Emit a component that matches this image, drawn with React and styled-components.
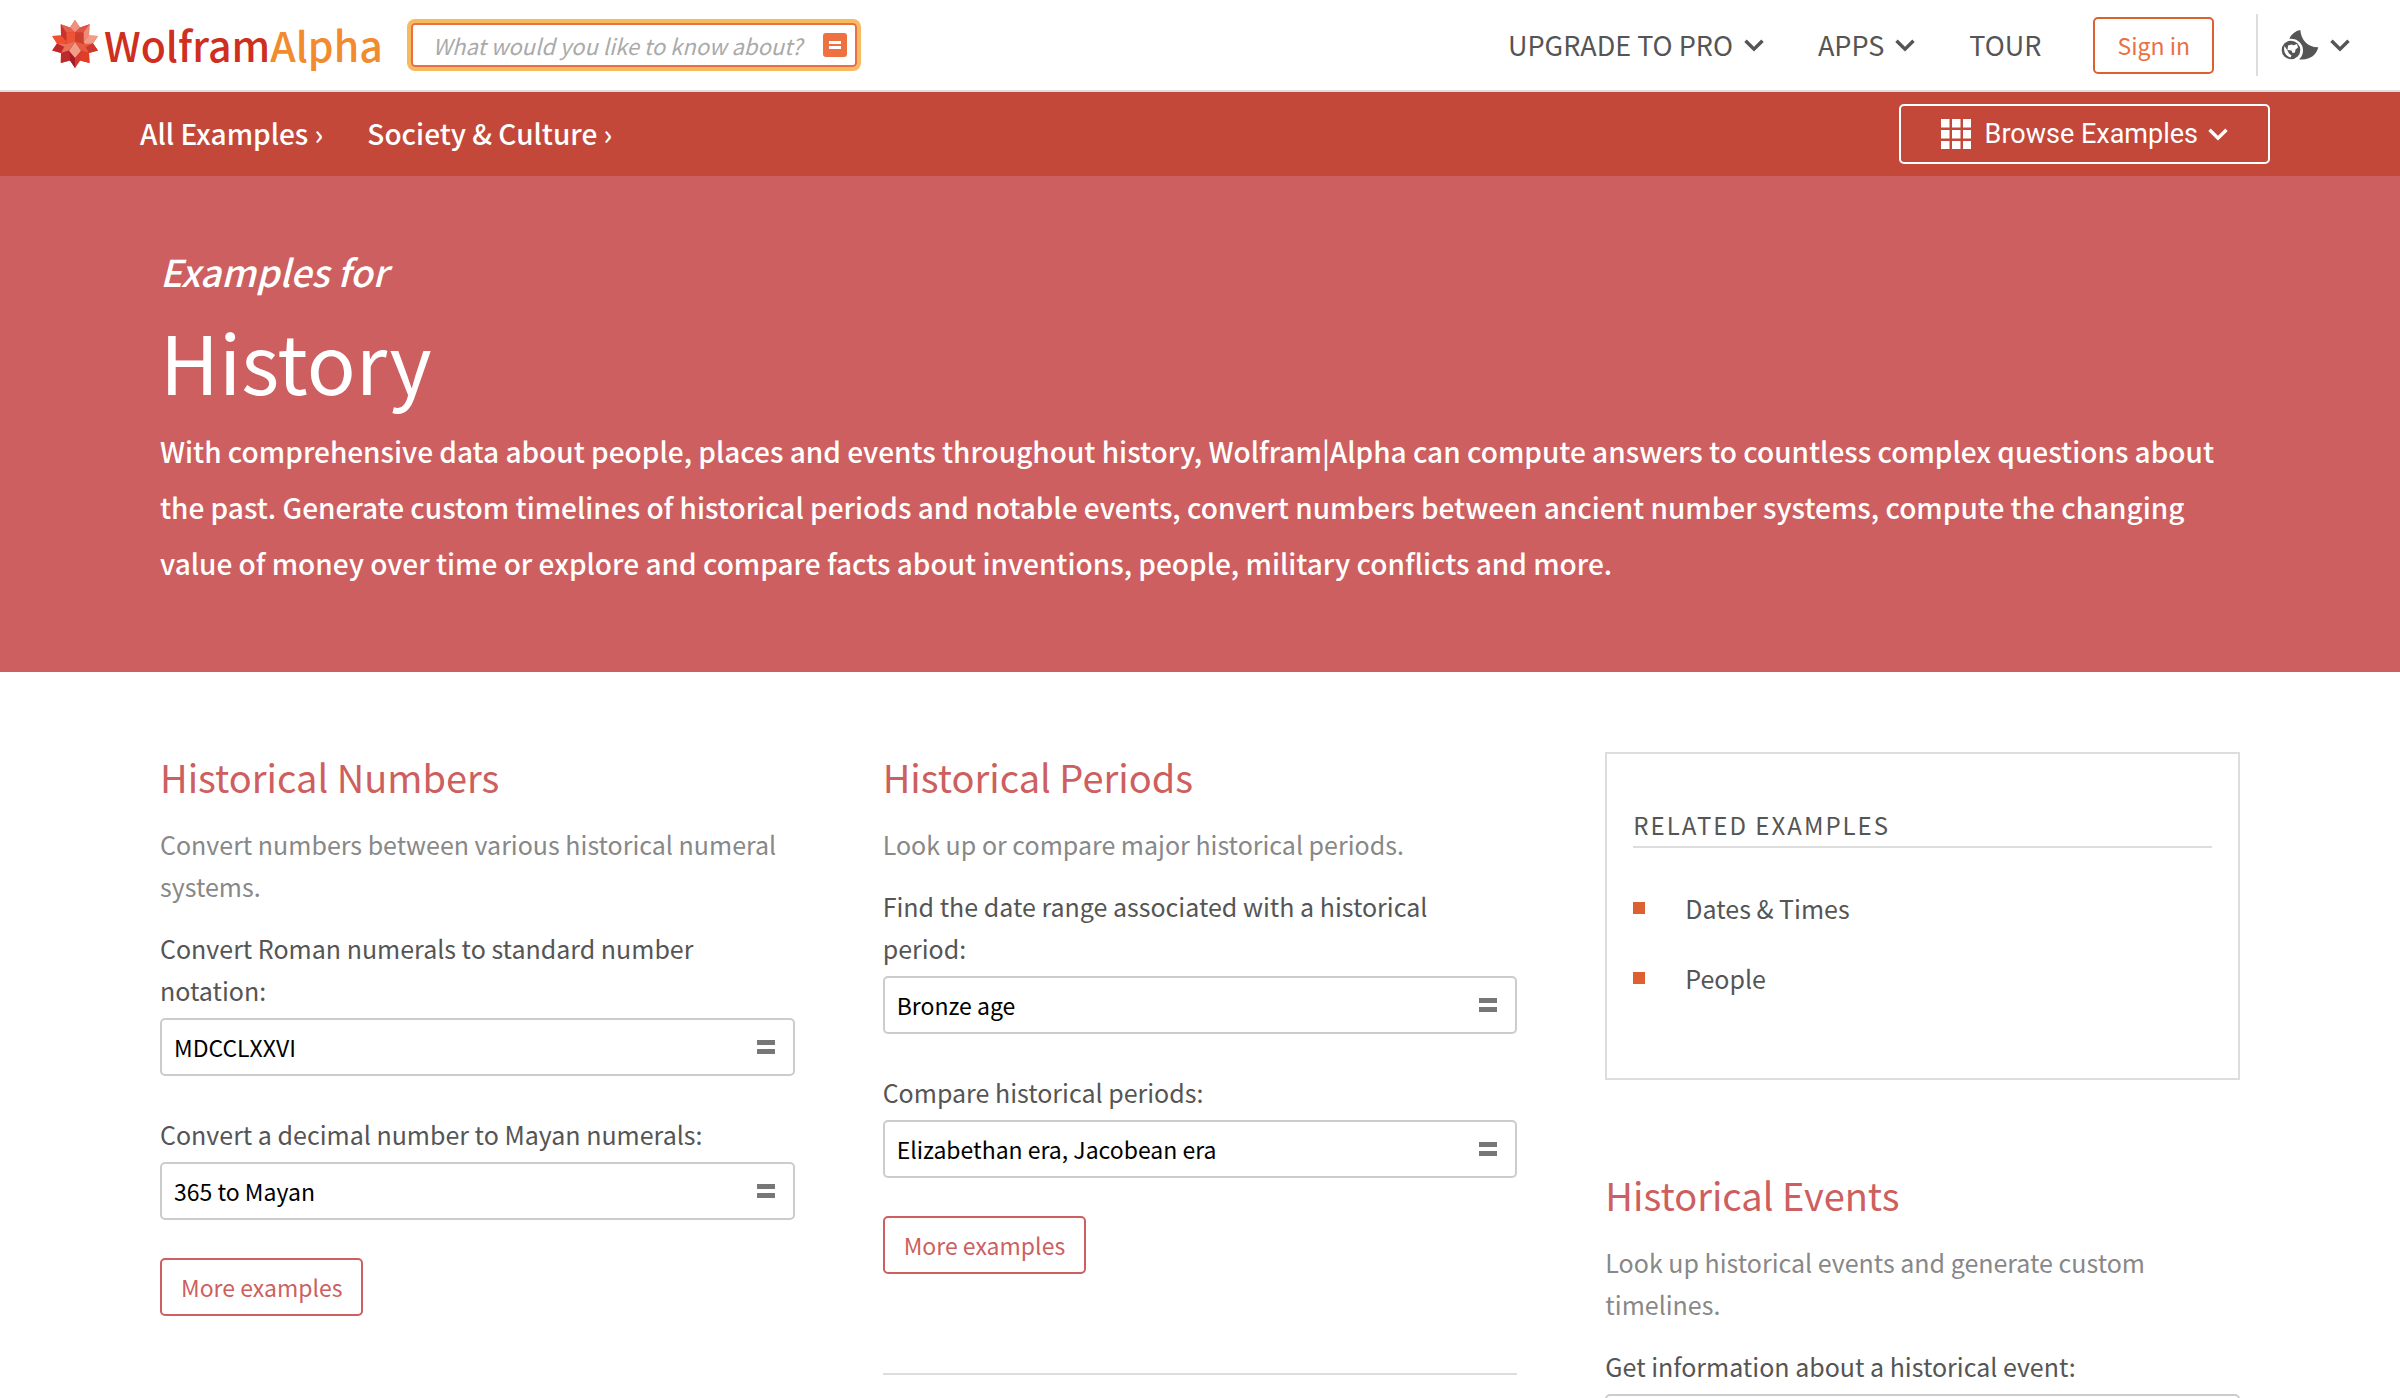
import React, { useId } from "react";
import styled, { createGlobalStyle, css } from "styled-components";

const sans = `"Noto Sans CJK SC", "Noto Sans", sans-serif`;

const GlobalStyle = createGlobalStyle`
  *, *::before, *::after { box-sizing: border-box; }
  html, body { margin: 0; background: #fff; }
  body { font-family: ${sans}; color: #555; overflow-x: hidden; }
  h1, h2, p, ul { margin: 0; padding: 0; font-weight: 400; }
  button, input { font-family: inherit; font-weight: 400; }
`;

const Header = styled.header`
  display: flex;
  align-items: center;
  height: 92px;
  padding: 0 50px 0 51px;
  border-bottom: 2px solid #ddd;
  background: #fff;
`;

const Logo = styled.a`
  display: flex;
  align-items: center;
  gap: 5px;
  margin-right: 28px;
  padding-bottom: 2px;
  font-size: 41px;
  font-weight: 500;
  line-height: 54px;
  color: #ce2f1e;
  text-decoration: none;
`;

const LogoAccent = styled.span`
  color: #f28a2e;
`;

const SearchForm = styled.form`
  display: flex;
  align-items: center;
  width: 446px;
  height: 44px;
  padding: 0 8px 0 20px;
  border: 2px solid #eb6f43;
  border-radius: 4px;
  box-shadow: 0 0 0 4px #f6bb60;
`;

const SearchInput = styled.input`
  flex: 1;
  min-width: 0;
  padding: 0;
  border: 0;
  outline: 0;
  background: transparent;
  font-size: 22px;
  line-height: 32px;
  color: #333;
  &::placeholder { color: #aaa; font-style: italic; opacity: 1; }
`;

const SearchButton = styled.button`
  display: flex;
  align-items: center;
  justify-content: center;
  width: 24px;
  height: 24px;
  padding: 0;
  border: 0;
  border-radius: 3px;
  background: #ee7142;
  color: #fff;
`;

const MainNav = styled.nav`
  display: flex;
  align-items: center;
  margin-left: auto;
`;

const NavItem = styled.button`
  display: flex;
  align-items: center;
  gap: 11px;
  margin-right: 54px;
  padding: 0;
  border: 0;
  background: none;
  font-size: 27px;
  line-height: 36px;
  color: #555;
`;

const NavLink = styled.a`
  margin-right: 52px;
  font-size: 27px;
  line-height: 36px;
  color: #555;
  text-decoration: none;
`;

const outlined = css`
  border: 2px solid;
  border-radius: 5px;
  background: none;
`;

const SignIn = styled.button`
  ${outlined}
  height: 57px;
  padding: 0 22px;
  font-size: 23px;
  color: #eb6f43;
  border-color: #dd6031;
`;

const ThemeToggle = styled.button`
  display: flex;
  align-items: center;
  gap: 11px;
  height: 62px;
  margin-left: 42px;
  padding: 0 0 0 23px;
  border: 0;
  border-left: 2px solid #ddd;
  background: none;
  color: #555;
`;

const SubBar = styled.nav`
  display: flex;
  align-items: center;
  height: 84px;
  padding: 0 130px 0 140px;
  background: #c3483a;
`;

const Crumb = styled.a`
  margin-right: 44px;
  padding-bottom: 2px;
  font-size: 28px;
  font-weight: 500;
  line-height: 42px;
  color: #fff;
  text-decoration: none;
`;

const BrowseButton = styled.button`
  ${outlined}
  display: flex;
  align-items: center;
  height: 60px;
  margin-left: auto;
  padding: 0 40px;
  border-color: #fff;
  color: #fff;
`;

const BrowseLabel = styled.span`
  margin: 0 10px 0 14px;
  font: 400 27px/36px Roboto, sans-serif;
`;

const Hero = styled.section`
  padding: 68px 160px 81px;
  background: #cd5f60;
  color: #fff;
`;

const Kicker = styled.p`
  font-size: 37px;
  font-weight: 500;
  line-height: 54px;
  font-style: italic;
`;

const Title = styled.h1`
  margin-bottom: 1px;
  font-size: 81px;
  line-height: 124px;
`;

const Intro = styled.p`
  font-size: 28px;
  font-weight: 500;
  line-height: 56px;
`;

const Columns = styled.main`
  display: grid;
  grid-template-columns: repeat(3, minmax(0, 1fr));
  column-gap: 88px;
  align-items: start;
  padding: 80px 160px;
`;

const Topic = styled.section`
  display: flex;
  flex-direction: column;
  align-items: flex-start;
`;

const TopicTitle = styled.h2`
  font-size: 38px;
  line-height: 50px;
  color: #cd5f60;
`;

const Summary = styled.p`
  margin-top: 21px;
  font-size: 25px;
  line-height: 42px;
  color: #888;
`;

const Example = styled.div`
  width: 100%;
  margin-top: ${(p) => (p.$first ? "20px" : "37px")};
`;

const ExampleLabel = styled.label`
  display: block;
  padding-right: 12px;
  font-size: 25px;
  line-height: 42px;
`;

const ExampleField = styled.div`
  display: flex;
  align-items: center;
  height: 58px;
  margin-top: 7px;
  padding: 0 18px 0 12px;
  border: 2px solid #ccc;
  border-radius: 5px;
`;

const ExampleInput = styled.input`
  flex: 1;
  min-width: 0;
  padding: 0;
  border: 0;
  outline: 0;
  background: none;
  font-size: 23px;
  line-height: 36px;
  color: #000;
`;

const Compute = styled.button`
  display: flex;
  padding: 0;
  border: 0;
  background: none;
  color: #777;
`;

const MoreButton = styled.button`
  ${outlined}
  height: 58px;
  margin-top: 38px;
  padding: 0 19px;
  border-color: #cd5f60;
  font-size: 23px;
  color: #cd5f60;
`;

const Divider = styled.hr`
  width: 100%;
  height: 2px;
  margin: 99px 0 0;
  border: 0;
  background: #ddd;
`;

const Related = styled.aside`
  height: 328px;
  margin-bottom: 90px;
  padding: 53px 26px;
  border: 2px solid #ddd;
`;

const RelatedTitle = styled.h2`
  padding-bottom: 3px;
  border-bottom: 2px solid #ddd;
  font-size: 24px;
  line-height: 36px;
  letter-spacing: 2px;
`;

const RelatedList = styled.ul`
  display: flex;
  flex-direction: column;
  gap: 28px;
  margin-top: 39px;
  list-style: none;
`;

const RelatedItem = styled.li`
  display: flex;
  align-items: center;
  gap: 40px;
  font-size: 25px;
  line-height: 42px;
  &::before { content: ""; width: 12px; height: 12px; background: #dd6031; }
`;

const RelatedLink = styled.a`
  color: #555;
  text-decoration: none;
`;

function Spikey() {
  return (
    <svg width="48" height="48" viewBox="0 0 47 48" aria-hidden="true">
      <path fill="#d5402e" d="M23.500 0l5 7.500L38 4.300l-.5 11.200 9 .5-5 7.500 5 7-9 2.500.5 10-9.500-2.500-5 7.500-5-7.500-9.200 2.500.2-10-8.800-2.500 4.800-7L.7 16l8.800-.5-.2-11.200 9.200 3.200z" />
      <path fill="#f0907e" d="M23.500 0l5 7.500-5 5-5-5z" />
      <path fill="#c8322b" d="M9.300 4.300l5.700 8.200v9L9.500 15.500z" />
      <path fill="#e2604e" d="M9.300 4.300l9.200 3.200 5 5H15z" />
      <path fill="#dd5546" d="M38 4.300l-9.500 3.200-5 5H32z" />
      <path fill="#ef8a78" d="M38 4.300l-6 8.200v9l5.500-6z" />
      <path fill="#f04f30" d="M.7 16l8.800-.5 5.500 6-2 3.500-7.500-1.500z" />
      <path fill="#f29b87" d="M46.500 16l-9-.5-5.500 6 2 3.500 7.500-1.500z" />
      <path fill="#ee5336" d="M15 12.500h8.500v9L15 24z" />
      <path fill="#cf3f30" d="M23.500 12.500H32V24l-8.500-2.500z" />
      <path fill="#c0272b" d="M.7 30.500l4.800-7L13 25l-3.500 8z" />
      <path fill="#cc3830" d="M46.500 30.500l-5-7L34 25l3.500 8z" />
      <path fill="#e9705a" d="M5.500 23.500L15 24l8.500-2.500-6 9-8 2.500L13 27z" />
      <path fill="#e65a40" d="M41.500 23.500L32 24l-8.500-2.500 6 9 8 2.500L34 27z" />
      <path fill="#f39c88" d="M23.500 22l6 9-6 7-6-7z" />
      <path fill="#bd2a2c" d="M9.500 33l8-2.500 1 10L9.300 43z" />
      <path fill="#e03c26" d="M37.500 33l-8-2.500-1 10L38 43z" />
      <path fill="#a51c26" d="M17.500 31l6 7v10l-5-7.500z" />
      <path fill="#d33a30" d="M29.500 31l-6 7v10l5-7.500z" />
    </svg>
  );
}

function Chevron() {
  return (
    <svg width="20" height="13" viewBox="0 0 20 13" fill="none" aria-hidden="true">
      <path d="M1.500 1.700l8.500 8.500 8.500-8.500" stroke="currentColor" strokeWidth="3.400" />
    </svg>
  );
}

function Equals({ width = 18, height = 14, bar = 5 }) {
  return (
    <svg width={width} height={height} viewBox={`0 0 ${width} ${height}`} fill="currentColor" aria-hidden="true">
      <rect width={width} height={bar} />
      <rect y={height - bar} width={width} height={bar} />
    </svg>
  );
}

function GlobeMoon() {
  return (
    <svg width="38" height="32" viewBox="0 0 38 32" aria-hidden="true">
      <path fill="#555" d="M19.300 1C20 10 26 18.500 37.300 18.300 35 27 28 31.500 18 30.200 22 27.500 23 21 21 16.500 19 12 14 9 8.300 9.800 10.500 5 14.500 2 19.300 1z" />
      <circle cx="10" cy="21" r="9.300" fill="#555" />
      <path fill="#fff" d="M7 16.500l3.500-1 2 .8 3.500-1.300 1 3.500-2.500 2-.5 3-2.500.5-1-2.500-4-.5z" />
      <path fill="#fff" d="M3.500 17c-1.500 5 1 10 6 11.500l1-2-2.500-2-1.500-3z" />
    </svg>
  );
}

function GridIcon() {
  return (
    <svg width="30" height="30" viewBox="0 0 30 30" fill="currentColor" aria-hidden="true">
      {[0, 11, 22].map((y) => [0, 11, 22].map((x) => <rect key={`${x}-${y}`} x={x} y={y} width="8.500" height="8.500" />))}
    </svg>
  );
}

function ExampleQuery({ label, query, first }) {
  const id = useId();
  return (
    <Example $first={first}>
      <ExampleLabel htmlFor={id}>{label}</ExampleLabel>
      <ExampleField>
        <ExampleInput id={id} defaultValue={query} />
        <Compute type="button" aria-label="Compute"><Equals /></Compute>
      </ExampleField>
    </Example>
  );
}

function TopicBlock({ title, summary, examples, more, divided }) {
  return (
    <Topic>
      <TopicTitle>{title}</TopicTitle>
      <Summary>{summary}</Summary>
      {examples.map(([label, query], i) => (
        <ExampleQuery key={label} label={label} query={query} first={i === 0} />
      ))}
      {more && <MoreButton type="button">More examples</MoreButton>}
      {divided && <Divider />}
    </Topic>
  );
}

export default function App() {
  return (
    <>
      <GlobalStyle />
      <Header>
        <Logo href="#home">
          <Spikey />
          <span>Wolfram<LogoAccent>Alpha</LogoAccent></span>
        </Logo>
        <SearchForm onSubmit={(e) => e.preventDefault()}>
          <SearchInput aria-label="Search" placeholder="What would you like to know about?" />
          <SearchButton aria-label="Compute"><Equals width={12} height={8} bar={3} /></SearchButton>
        </SearchForm>
        <MainNav>
          <NavItem type="button">UPGRADE TO PRO<Chevron /></NavItem>
          <NavItem type="button">APPS<Chevron /></NavItem>
          <NavLink href="#tour">TOUR</NavLink>
          <SignIn type="button">Sign in</SignIn>
          <ThemeToggle type="button" aria-label="Theme and language"><GlobeMoon /><Chevron /></ThemeToggle>
        </MainNav>
      </Header>
      <SubBar>
        <Crumb href="#examples">All Examples ›</Crumb>
        <Crumb href="#society">Society &amp; Culture ›</Crumb>
        <BrowseButton type="button"><GridIcon /><BrowseLabel>Browse Examples</BrowseLabel><Chevron /></BrowseButton>
      </SubBar>
      <Hero>
        <Kicker>Examples for</Kicker>
        <Title>History</Title>
        <Intro>
          With comprehensive data about people, places and events throughout history, Wolfram|Alpha can compute answers
          to countless complex questions about the past. Generate custom timelines of historical periods and notable
          events, convert numbers between ancient number systems, compute the changing value of money over time or
          explore and compare facts about inventions, people, military conflicts and more.
        </Intro>
      </Hero>
      <Columns>
        <TopicBlock
          title="Historical Numbers"
          summary="Convert numbers between various historical numeral systems."
          examples={[
            ["Convert Roman numerals to standard number notation:", "MDCCLXXVI"],
            ["Convert a decimal number to Mayan numerals:", "365 to Mayan"],
          ]}
          more
        />
        <TopicBlock
          title="Historical Periods"
          summary="Look up or compare major historical periods."
          examples={[
            ["Find the date range associated with a historical period:", "Bronze age"],
            ["Compare historical periods:", "Elizabethan era, Jacobean era"],
          ]}
          more
          divided
        />
        <div>
          <Related>
            <RelatedTitle>RELATED EXAMPLES</RelatedTitle>
            <RelatedList>
              <RelatedItem><RelatedLink href="#dates">Dates &amp; Times</RelatedLink></RelatedItem>
              <RelatedItem><RelatedLink href="#people">People</RelatedLink></RelatedItem>
            </RelatedList>
          </Related>
          <TopicBlock
            title="Historical Events"
            summary="Look up historical events and generate custom timelines."
            examples={[["Get information about a historical event:", ""]]}
          />
        </div>
      </Columns>
    </>
  );
}
